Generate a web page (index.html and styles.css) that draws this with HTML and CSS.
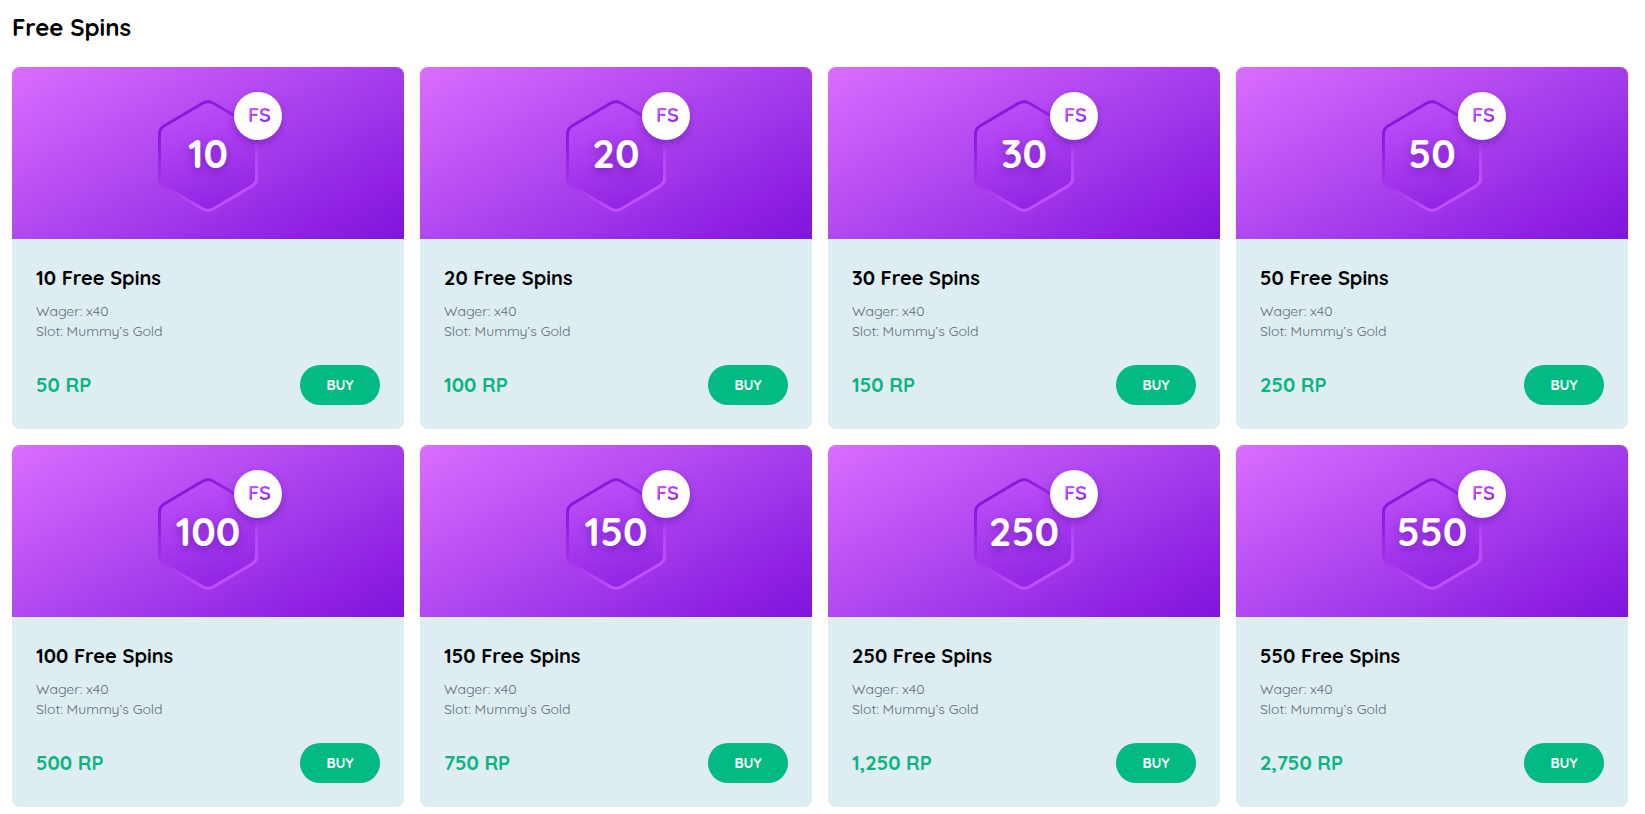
FILE: index.html
```
<!DOCTYPE html>
<html lang="en">
<head>
    <meta charset="UTF-8">
    <meta name="viewport" content="width=device-width, initial-scale=1.0">
    <title>Free Spins</title>
    <link rel="stylesheet" href="styles.css">
</head>
<body>

    <!-- shared hexagon shape -->
    <svg class="sprite" width="0" height="0" aria-hidden="true">
        <defs>
            <linearGradient id="hex-fill" x1="0.3" y1="0" x2="0.6" y2="1">
                <stop offset="0" stop-color="#be50f9"/>
                <stop offset="1" stop-color="#9024e3"/>
            </linearGradient>
            <linearGradient id="hex-line" x1="0.25" y1="0.05" x2="0.75" y2="0.95">
                <stop offset="0" stop-color="#8216da"/>
                <stop offset="1" stop-color="#c653ff"/>
            </linearGradient>
            <symbol id="hexagon" viewBox="0 0 100 112">
                <path d="M45 3 Q50 0.500 55 3 L94 26 Q98.500 29 98.500 34 V78 Q98.500 83 94 86 L55 109 Q50 111.500 45 109 L6 86 Q1.500 83 1.500 78 V34 Q1.500 29 6 26 Z" fill="url(#hex-fill)" stroke="url(#hex-line)" stroke-width="3"/>
            </symbol>
        </defs>
    </svg>

    <main class="container">
        <h1>Free Spins</h1>

        <div class="cards">
            <article class="card">
                <div class="card-image">
                    <div class="hex">
                        <svg aria-hidden="true"><use href="#hexagon"/></svg>
                        <span class="hex-number">10</span>
                        <span class="badge"><span>FS</span></span>
                    </div>
                </div>
                <div class="card-body">
                    <h2>10 Free Spins</h2>
                    <p>Wager: x40<br>Slot: Mummy’s Gold</p>
                    <div class="card-footer">
                        <span class="price">50 RP</span>
                        <button type="button">BUY</button>
                    </div>
                </div>
            </article>

            <article class="card">
                <div class="card-image">
                    <div class="hex">
                        <svg aria-hidden="true"><use href="#hexagon"/></svg>
                        <span class="hex-number">20</span>
                        <span class="badge"><span>FS</span></span>
                    </div>
                </div>
                <div class="card-body">
                    <h2>20 Free Spins</h2>
                    <p>Wager: x40<br>Slot: Mummy’s Gold</p>
                    <div class="card-footer">
                        <span class="price">100 RP</span>
                        <button type="button">BUY</button>
                    </div>
                </div>
            </article>

            <article class="card">
                <div class="card-image">
                    <div class="hex">
                        <svg aria-hidden="true"><use href="#hexagon"/></svg>
                        <span class="hex-number">30</span>
                        <span class="badge"><span>FS</span></span>
                    </div>
                </div>
                <div class="card-body">
                    <h2>30 Free Spins</h2>
                    <p>Wager: x40<br>Slot: Mummy’s Gold</p>
                    <div class="card-footer">
                        <span class="price">150 RP</span>
                        <button type="button">BUY</button>
                    </div>
                </div>
            </article>

            <article class="card">
                <div class="card-image">
                    <div class="hex">
                        <svg aria-hidden="true"><use href="#hexagon"/></svg>
                        <span class="hex-number">50</span>
                        <span class="badge"><span>FS</span></span>
                    </div>
                </div>
                <div class="card-body">
                    <h2>50 Free Spins</h2>
                    <p>Wager: x40<br>Slot: Mummy’s Gold</p>
                    <div class="card-footer">
                        <span class="price">250 RP</span>
                        <button type="button">BUY</button>
                    </div>
                </div>
            </article>

            <article class="card">
                <div class="card-image">
                    <div class="hex">
                        <svg aria-hidden="true"><use href="#hexagon"/></svg>
                        <span class="hex-number">100</span>
                        <span class="badge"><span>FS</span></span>
                    </div>
                </div>
                <div class="card-body">
                    <h2>100 Free Spins</h2>
                    <p>Wager: x40<br>Slot: Mummy’s Gold</p>
                    <div class="card-footer">
                        <span class="price">500 RP</span>
                        <button type="button">BUY</button>
                    </div>
                </div>
            </article>

            <article class="card">
                <div class="card-image">
                    <div class="hex">
                        <svg aria-hidden="true"><use href="#hexagon"/></svg>
                        <span class="hex-number">150</span>
                        <span class="badge"><span>FS</span></span>
                    </div>
                </div>
                <div class="card-body">
                    <h2>150 Free Spins</h2>
                    <p>Wager: x40<br>Slot: Mummy’s Gold</p>
                    <div class="card-footer">
                        <span class="price">750 RP</span>
                        <button type="button">BUY</button>
                    </div>
                </div>
            </article>

            <article class="card">
                <div class="card-image">
                    <div class="hex">
                        <svg aria-hidden="true"><use href="#hexagon"/></svg>
                        <span class="hex-number">250</span>
                        <span class="badge"><span>FS</span></span>
                    </div>
                </div>
                <div class="card-body">
                    <h2>250 Free Spins</h2>
                    <p>Wager: x40<br>Slot: Mummy’s Gold</p>
                    <div class="card-footer">
                        <span class="price">1,250 RP</span>
                        <button type="button">BUY</button>
                    </div>
                </div>
            </article>

            <article class="card">
                <div class="card-image">
                    <div class="hex">
                        <svg aria-hidden="true"><use href="#hexagon"/></svg>
                        <span class="hex-number">550</span>
                        <span class="badge"><span>FS</span></span>
                    </div>
                </div>
                <div class="card-body">
                    <h2>550 Free Spins</h2>
                    <p>Wager: x40<br>Slot: Mummy’s Gold</p>
                    <div class="card-footer">
                        <span class="price">2,750 RP</span>
                        <button type="button">BUY</button>
                    </div>
                </div>
            </article>
        </div>
    </main>

</body>
</html>
```

FILE: styles.css
```
* {
    box-sizing: border-box;
}

body {
    font-family: Quicksand, Lato, sans-serif;
    background-color: #fff;
    margin: 0;
    color: #000;
}

.sprite {
    position: absolute;
}

.container {
    padding: 11px 17px 7px 12px;
}

h1 {
    margin: 0 0 24px;
    font-size: 24px;
    line-height: 32px;
    font-weight: 700;
}

.cards {
    display: grid;
    grid-template-columns: repeat(4, 1fr);
    gap: 16px;
}

.card {
    background-color: #deedf1;
    border-radius: 8px;
    overflow: hidden;
}

.card-image {
    height: 172px;
    display: flex;
    justify-content: center;
    padding-top: 33px;
    background: linear-gradient(150deg, #da6eff 0%, #a63dec 56%, #8f20e3 84%, #8015da 100%);
}

.hex {
    position: relative;
    width: 100px;
    height: 112px;
    display: flex;
    align-items: center;
    justify-content: center;
}

.hex svg {
    position: absolute;
    top: 0;
    left: 0;
    width: 100%;
    height: 100%;
}

.hex-number {
    position: relative;
    color: #fff;
    font-size: 40px;
    line-height: 48px;
    font-weight: 700;
    padding-bottom: 6px;
    text-shadow: 0 4px 8px rgba(70, 0, 140, 0.4);
}

.badge {
    position: absolute;
    top: -8px;
    right: -24px;
    width: 48px;
    height: 48px;
    display: flex;
    align-items: center;
    justify-content: center;
    padding: 0 0 2px 3px;
    border-radius: 50%;
    background-color: #fff;
    box-shadow: 0 4px 8px rgba(70, 0, 140, 0.35);
    font-size: 20px;
    line-height: 24px;
    font-weight: 700;
}

.badge span {
    background: linear-gradient(150deg, #da6eff, #7f15da);
    -webkit-background-clip: text;
    background-clip: text;
    color: transparent;
}

.card-body {
    padding: 24px;
}

h2 {
    margin: 0 0 8px;
    font-size: 20px;
    line-height: 30px;
    font-weight: 700;
}

.card-body p {
    margin: 0 0 24px;
    font-size: 14px;
    line-height: 20px;
    font-weight: 400;
    color: #606c76;
}

.card-footer {
    display: flex;
    align-items: center;
    justify-content: space-between;
}

.price {
    font-size: 20px;
    line-height: 24px;
    font-weight: 700;
    color: #0bb481;
}

button {
    font-family: inherit;
    width: 80px;
    height: 40px;
    padding: 0;
    border: none;
    border-radius: 20px;
    background-color: #03ba82;
    color: #fff;
    font-size: 14px;
    font-weight: 700;
    cursor: pointer;
}

button:hover {
    background-color: #02a674;
}

@media (max-width: 1100px) {
    .cards {
        grid-template-columns: repeat(2, 1fr);
    }
}

@media (max-width: 600px) {
    .cards {
        grid-template-columns: 1fr;
    }
}
```
